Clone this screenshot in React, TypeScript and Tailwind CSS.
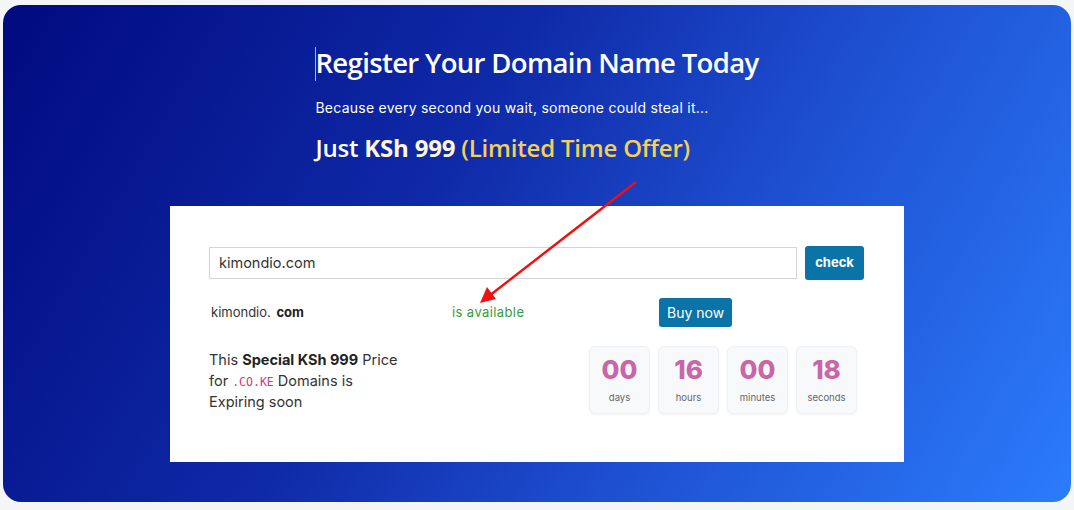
import React from "react";

const units = [
  { v: "00", l: "days" },
  { v: "16", l: "hours" },
  { v: "00", l: "minutes" },
  { v: "18", l: "seconds" },
];

export default function App() {
  return (
    <div className="h-[510px] w-[1074px] bg-[#f4f5f7] pl-[3px] pr-[3px] pt-[5px] pb-[8px]">
      <div className="relative h-full w-full rounded-[18px] bg-[linear-gradient(120deg,#010a7f_0%,#0f2aa8_40%,#1d4fd0_65%,#2b7cfb_100%)] pt-[38px]">
        <div className="mx-auto w-fit">
          <div className="relative">
            <span className="absolute left-0 top-[4px] h-[34px] w-px bg-[#aab4ff]" />
            <h1 className="text-[27.5px] font-semibold leading-[40px] tracking-[-0.65px] text-white [font-family:'Open_Sans',sans-serif]">
              Register Your Domain Name Today
            </h1>
          </div>
          <p className="mt-[16px] text-[14px] leading-[18px] tracking-[0.25px] text-white [font-family:Inter,sans-serif]">
            Because every second you wait, someone could steal it...
          </p>
          <p className="mt-[15px] text-[24px] font-semibold leading-[32px] tracking-[-0.2px] text-white [font-family:'Open_Sans',sans-serif]">
            Just <span className="font-bold text-[#fff6dc]">KSh 999</span>{" "}
            <span className="text-[#f6cf57]">(Limited Time Offer)</span>
          </p>
        </div>

        <div className="mx-auto mt-[42px] h-[256px] w-[734px] bg-white px-[39px] pt-[40px] [font-family:Inter,sans-serif]">
          <div className="flex items-center gap-[8px]">
            <div className="flex h-[32px] w-[588px] items-center border border-[#d4d4d4] px-[9px] text-[14.5px] text-[#333]">
              kimondio.com
            </div>
            <button className="h-[34px] w-[59px] rounded-[3px] bg-[#0a74a8] text-[13px] font-bold text-white">
              check
            </button>
          </div>

          <div className="mt-[18px] flex items-center text-[13px]">
            <div className="w-[243px] pl-[2px] text-[#333]">
              kimondio. <span className="ml-[2px] font-bold text-[#222]">com</span>
            </div>
            <div className="w-[207px] tracking-[0.4px] text-[#3a9b3a]">is available</div>
            <button className="h-[29px] rounded-[3px] bg-[#0a74a8] px-[8px] text-[14px] text-white">
              Buy now
            </button>
          </div>

          <div className="mt-[19px] flex">
            <div className="flex w-[380px] flex-col pt-[3px] text-[14.5px] leading-[21px] text-[#333]">
              <div className="h-[21px]">
                This <b className="text-[#222]">Special KSh 999</b> Price
              </div>
              <div className="h-[21px]">
                for{" "}
                <span className="text-[11.5px] leading-[0] text-[#d63384] [font-family:'DejaVu_Sans_Mono',monospace]">.CO.KE</span>{" "}
                Domains is
              </div>
              <div className="h-[21px]">Expiring soon</div>
            </div>
            <div className="flex gap-[8px]">
              {units.map((u) => (
                <div
                  key={u.l}
                  className="flex h-[68px] w-[61px] flex-col items-center rounded-[6px] border border-[#eef0f3] bg-[#f8f9fb] pt-[7px] shadow-[0_1px_3px_rgba(0,0,0,0.05)]"
                >
                  <div className="text-[26px] font-extrabold leading-[32px] text-[#c966a8] [font-family:Inter,sans-serif]">
                    {u.v}
                  </div>
                  <div className="mt-[5px] text-[9.5px] text-[#666]">{u.l}</div>
                </div>
              ))}
            </div>
          </div>
        </div>

        <svg className="pointer-events-none absolute left-0 top-0" width="1068" height="497">
          <line x1="633" y1="177" x2="486" y2="291" stroke="#ee1111" strokeWidth="2.5" />
          <polygon points="477,298 484,282 493,294" fill="#ee1111" />
        </svg>
      </div>
    </div>
  );
}
